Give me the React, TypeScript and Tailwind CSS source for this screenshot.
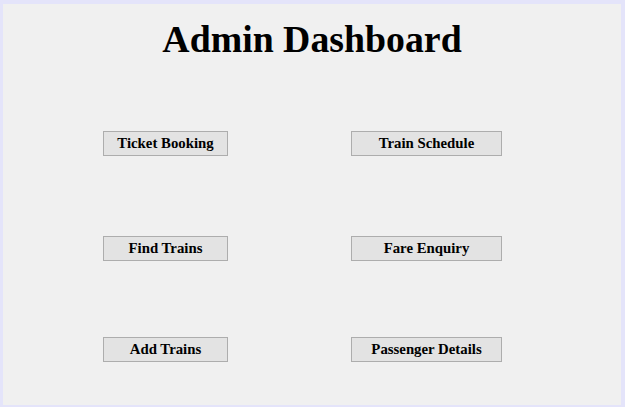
import React from 'react';

const btn =
  'h-[25px] bg-[#e3e3e3] border border-[#adadad] text-[14.8px] font-bold text-black flex items-center justify-center';

const rows: [string, string][] = [
  ['Ticket Booking', 'Train Schedule'],
  ['Find Trains', 'Fare Enquiry'],
  ['Add Trains', 'Passenger Details'],
];

const App: React.FC = () => {
  return (
    <div
      className="w-[625px] h-[407px] bg-[#f0f0f0] border-[#e4e4fa] border-l-[3px] border-t-[4px] border-r-[4px] border-b-[2px]"
      style={{ fontFamily: '"Liberation Serif", "DejaVu Serif", serif' }}
    >
      <h1 className="text-center text-[37.8px] font-bold leading-none pt-[17px] text-black">Admin Dashboard</h1>
      <div className="flex flex-col mt-[72px] gap-y-[80px]">
        {rows.map(([a, b], i) => (
          <div key={i} className={`flex pl-[100px] gap-[123px] ${i === 2 ? '-mt-[4px]' : ''}`}>
            <button className={`${btn} w-[125px]`}>{a}</button>
            <button className={`${btn} w-[151px]`}>{b}</button>
          </div>
        ))}
      </div>
    </div>
  );
};

export default App;
